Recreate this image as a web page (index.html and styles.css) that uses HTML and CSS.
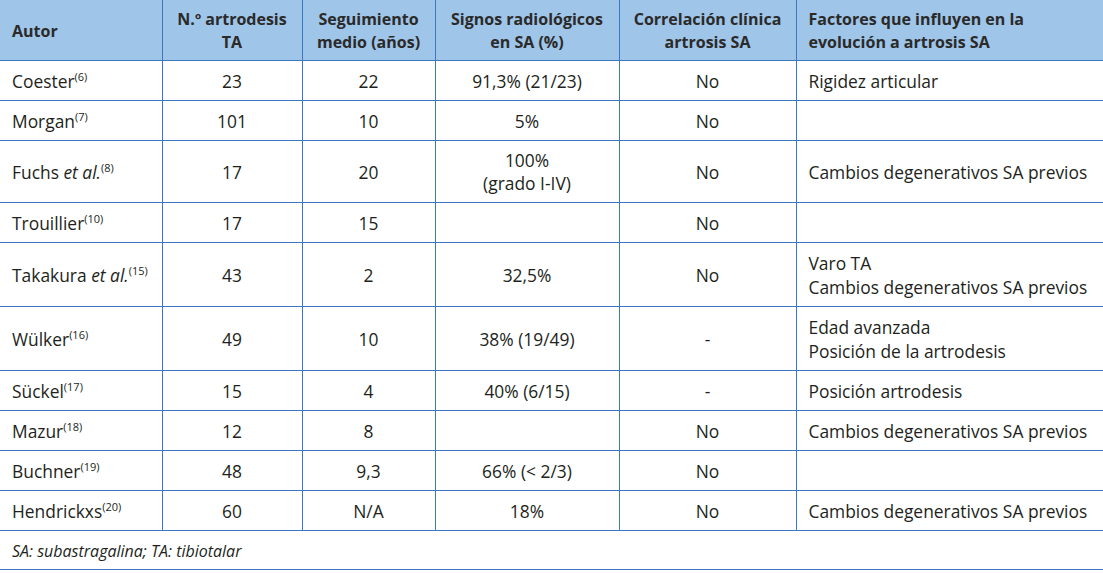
FILE: index.html
```html
<!DOCTYPE html>
<html lang="es">
<head>
<meta charset="utf-8">
<title>Tabla artrodesis</title>
<link rel="stylesheet" href="styles.css">
</head>
<body>
<table class="data">
  <colgroup>
    <col class="c1"><col class="c2"><col class="c3"><col class="c4"><col class="c5"><col class="c6">
  </colgroup>
  <thead>
    <tr>
      <th class="left">Autor</th>
      <th>N.º artrodesis<br>TA</th>
      <th>Seguimiento<br>medio (años)</th>
      <th>Signos radiológicos<br>en SA (%)</th>
      <th>Correlación clínica<br>artrosis SA</th>
      <th class="left">Factores que influyen en la<br>evolución a artrosis SA</th>
    </tr>
  </thead>
  <tbody>
    <tr><td class="left">Coester<sup>(6)</sup></td><td>23</td><td>22</td><td>91,3% (21/23)</td><td>No</td><td class="left">Rigidez articular</td></tr>
    <tr><td class="left">Morgan<sup>(7)</sup></td><td>101</td><td>10</td><td>5%</td><td>No</td><td class="left"></td></tr>
    <tr class="tight"><td class="left">Fuchs <i>et al.</i><sup>(8)</sup></td><td>17</td><td>20</td><td>100%<br>(grado I-IV)</td><td>No</td><td class="left">Cambios degenerativos SA previos</td></tr>
    <tr><td class="left">Trouillier<sup>(10)</sup></td><td>17</td><td>15</td><td></td><td>No</td><td class="left"></td></tr>
    <tr><td class="left">Takakura <i>et al.</i><sup>(15)</sup></td><td>43</td><td>2</td><td>32,5%</td><td>No</td><td class="left">Varo TA<br>Cambios degenerativos SA previos</td></tr>
    <tr><td class="left">Wülker<sup>(16)</sup></td><td>49</td><td>10</td><td>38% (19/49)</td><td>-</td><td class="left">Edad avanzada<br>Posición de la artrodesis</td></tr>
    <tr><td class="left">Sückel<sup>(17)</sup></td><td>15</td><td>4</td><td>40% (6/15)</td><td>-</td><td class="left">Posición artrodesis</td></tr>
    <tr><td class="left">Mazur<sup>(18)</sup></td><td>12</td><td>8</td><td></td><td>No</td><td class="left">Cambios degenerativos SA previos</td></tr>
    <tr><td class="left">Buchner<sup>(19)</sup></td><td>48</td><td>9,3</td><td>66% (&lt; 2/3)</td><td>No</td><td class="left"></td></tr>
    <tr><td class="left">Hendrickxs<sup>(20)</sup></td><td>60</td><td>N/A</td><td>18%</td><td>No</td><td class="left">Cambios degenerativos SA previos</td></tr>
  </tbody>
  <tfoot>
    <tr><td class="note" colspan="6">SA: subastragalina; TA: tibiotalar</td></tr>
  </tfoot>
</table>
</body>
</html>
```

FILE: styles.css
```css
html, body {
  margin: 0;
  padding: 0;
  background: #ffffff;
}

.data {
  border-collapse: collapse;
  table-layout: fixed;
  width: 1103px;
  font-family: "Open Sans", "Noto Sans", sans-serif;
  color: #231f20;
}

.c1 { width: 162px; }
.c2 { width: 140px; }
.c3 { width: 133px; }
.c4 { width: 184px; }
.c5 { width: 177px; }
.c6 { width: 307px; }

.data th,
.data td {
  border: 1px solid #3b78c1;
  text-align: center;
  vertical-align: middle;
  padding: 8px 12px 7px;
  overflow: hidden;
  white-space: nowrap;
}

.data th {
  background: #9fc5e8;
  font-weight: 700;
  font-size: 16px;
  line-height: 23px;
  padding: 8px 12px 6px;
  border-top: none;
  color: #2a2a2a;
}

.data td {
  font-size: 17.4px;
  line-height: 24px;
}

.data tr > :first-child {
  border-left: none;
}

.data .left {
  text-align: left;
}

.data sup {
  font-size: 11px;
  line-height: 0;
  vertical-align: 7px;
}

.data tr.tight td {
  line-height: 23px;
}

.data td.note {
  text-align: left;
  font-style: italic;
  font-size: 16px;
  line-height: 22px;
  padding: 9px 12px 7px;
}
```
